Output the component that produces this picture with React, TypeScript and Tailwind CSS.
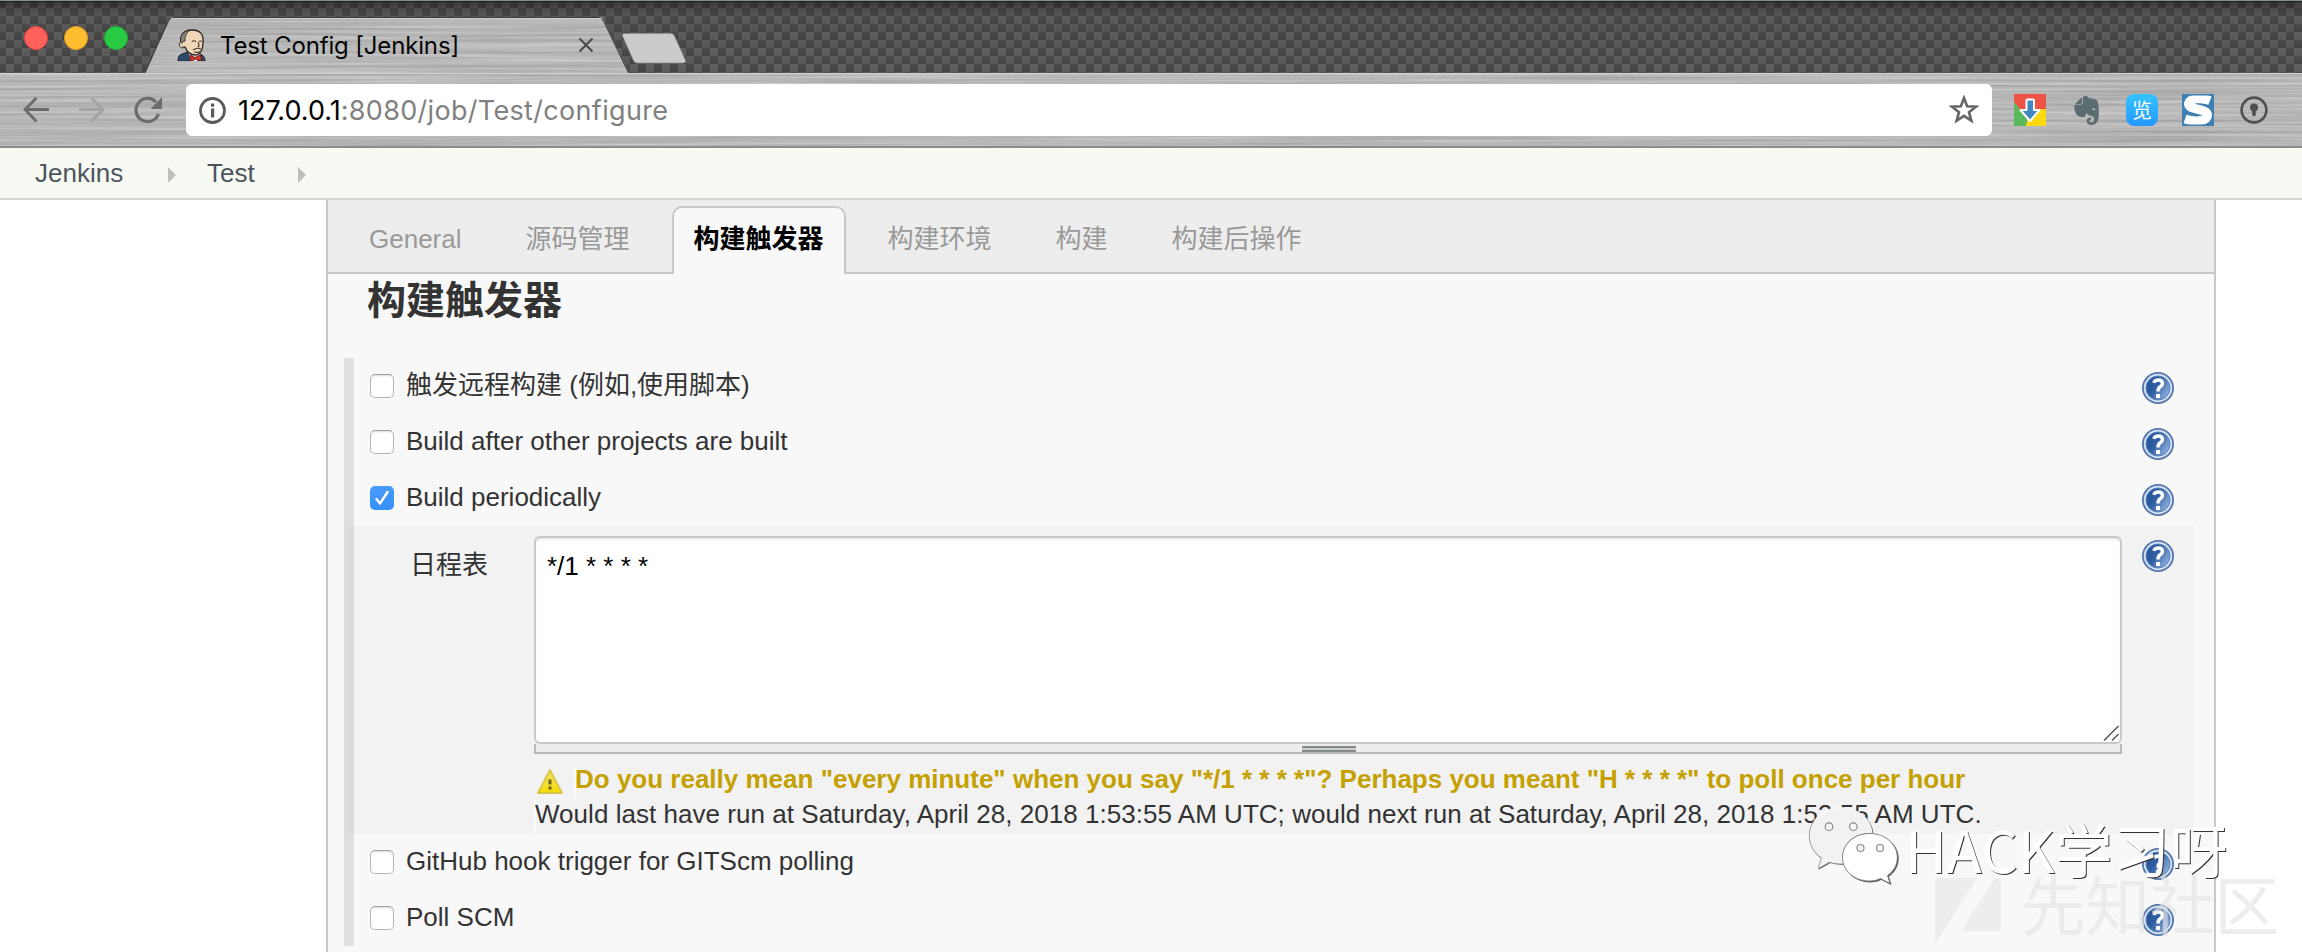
import React from "react";
import { SiEvernote } from "react-icons/si";

const LATIN = "font-['Liberation_Sans','Noto_Sans_CJK_SC',sans-serif]";

function Brushed({ id, seed }: { id: string; seed: number }) {
  return (
    <svg className="pointer-events-none absolute inset-0 h-full w-full" aria-hidden="true">
      <filter id={id} x="0" y="0" width="100%" height="100%" colorInterpolationFilters="sRGB">
        <feTurbulence type="fractalNoise" baseFrequency="0.004 0.35" numOctaves={3} seed={seed} />
        <feColorMatrix values="0.22 0 0 0 0.61  0.22 0 0 0 0.61  0.22 0 0 0 0.61  0 0 0 0 1" />
      </filter>
      <rect width="100%" height="100%" filter={`url(#${id})`} />
    </svg>
  );
}

function CarbonFibre() {
  return (
    <svg className="pointer-events-none absolute inset-0 h-full w-full" aria-hidden="true">
      <defs>
        <linearGradient id="cell" x1="0" y1="0" x2="0" y2="1">
          <stop offset="0" stopColor="#4e4e4e" />
          <stop offset="1" stopColor="#434343" />
        </linearGradient>
        <linearGradient id="lite" x1="0" y1="0" x2="0" y2="1">
          <stop offset="0" stopColor="#606060" />
          <stop offset="1" stopColor="#585858" />
        </linearGradient>
        <pattern id="weave" x="-2" y="0" width="16" height="16" patternUnits="userSpaceOnUse">
          <rect width="16" height="16" fill="url(#lite)" />
          <rect x="0" y="0" width="8" height="8" fill="url(#cell)" />
          <rect x="8" y="8" width="8" height="8" fill="url(#cell)" />
        </pattern>
        <linearGradient id="topshade" x1="0" y1="0" x2="0" y2="1">
          <stop offset="0" stopColor="#000" stopOpacity="0.4" />
          <stop offset="0.2" stopColor="#000" stopOpacity="0.05" />
          <stop offset="1" stopColor="#000" stopOpacity="0" />
        </linearGradient>
      </defs>
      <rect width="100%" height="100%" fill="url(#weave)" />
      <rect width="100%" height="100%" fill="url(#topshade)" />
      <rect width="100%" height="1" fill="#8a8f8b" />
      <rect y="1" width="100%" height="1" fill="#202420" />
    </svg>
  );
}

function Butler() {
  return (
    <svg width="32" height="32" viewBox="0 0 32 32" aria-hidden="true">
      <path d="M2 32c0-4 1-6 4-7l6-2 12 2c3 1 5 3 5 7z" fill="#2d4a68" stroke="#1d2429" strokeWidth="1" />
      <path d="M12 22l3 10h6l3-7z" fill="#f5f1ec" />
      <path d="M5 15C3 6 8 1 16 1c8 0 12 4 11 13 0 7-3 12-8 12-5 0-8-3-10-8-2 1-4-1-4-3z" fill="#efd6b9" stroke="#2a2523" strokeWidth="1.3" />
      <path d="M5 16C3 7 7 2 14 1.200c-4 3-5 6-5 11l-2 0z" fill="#8b8480" stroke="#2a2523" strokeWidth="0.8" />
      <path d="M5 13c-3 1-2 6 2 6" fill="#efd6b9" stroke="#2a2523" strokeWidth="1" />
      <path d="M16 12.500q2-1.500 4 0M23 12.500q1.500-1 3 0M22 13c1 3 2 4 0 5M17 21c3-2 6-2 8-1M18 23q3 1 6-.5" fill="none" stroke="#4a3a30" strokeWidth="1.200" />
      <path d="M14 26l5 2.500 6-3v7l-5-2.500-6 2.500z" fill="#d9332c" stroke="#5c1512" strokeWidth="0.8" />
    </svg>
  );
}

function TabStrip() {
  return (
    <div className="relative flex h-[73px] items-start">
      <CarbonFibre />
      <div className="relative flex gap-4 pl-6 pt-[26px]">
        <span className="h-6 w-6 rounded-full border border-[#e2463f] bg-[#ff6059]" />
        <span className="h-6 w-6 rounded-full border border-[#e0a023] bg-[#ffbe2f]" />
        <span className="h-6 w-6 rounded-full border border-[#1fae34] bg-[#28cb41]" />
      </div>
      <div className="relative ml-[17px] mt-[17px] h-14 w-[484px]">
        <div className="absolute inset-0 [clip-path:polygon(26px_0,457px_0,100%_100%,0_100%)]">
          <Brushed id="brushTab" seed={4} />
        </div>
        <svg className="absolute inset-0" width="484" height="56" aria-hidden="true">
          <path d="M0 56L23 4Q25 .5 28 .5H454Q457 .5 458.500 4L483.500 56" fill="none" stroke="#3c3c3c" />
          <path d="M27 1.500H456" stroke="#cfcfcf" />
        </svg>
        <div className="relative flex h-full items-center pl-[31px] pr-[35px]">
          <Butler />
          <span className="ml-[12px] flex-1 whitespace-nowrap pt-[2px] font-[Inter,sans-serif] text-[24px] leading-8 tracking-[-0.16px] text-[#050505]">
            Test Config [Jenkins]
          </span>
          <svg width="16" height="16" viewBox="0 0 16 16" aria-hidden="true">
            <path d="M1.500 1.500l13 13M14.500 1.500l-13 13" stroke="#4c4c4c" strokeWidth="2.200" />
          </svg>
        </div>
      </div>
      <svg className="relative -ml-[8px] mt-[33px]" width="66" height="31" viewBox="0 0 66 31" aria-hidden="true">
        <path d="M3 .5H50q2.500 0 3.500 2.500L64.500 27.500q.5 2.500-2 2.500H16q-2.500 0-3.500-2.500L1.500 3Q1 .5 3 .5z" fill="#cbcbcb" stroke="#8d8d8d" strokeWidth="0.8" />
      </svg>
    </div>
  );
}

function ChromeDownload() {
  return (
    <svg width="32" height="32" viewBox="0 0 32 32" aria-hidden="true">
      <path d="M0 0h32v15H16L6 16 0 8z" fill="#ef5347" />
      <path d="M0 8l8 10 8 0-4 14H0z" fill="#5bb85b" />
      <path d="M16 15h16v17H12z" fill="#ffd90f" />
      <path d="M12.500 6.500q0-1 1-1h5.500q1 0 1 1V16h5.500L16 27 6.500 16h6z" fill="#3f87bd" stroke="#fff" strokeWidth="2" strokeLinejoin="round" />
    </svg>
  );
}

function Toolbar() {
  return (
    <div className="relative flex h-[75px] items-center border-b-2 border-[#8c8c8c] border-t border-t-[#d2d2d2] pl-[23px]">
      <Brushed id="brushBar" seed={11} />
      <svg className="relative" width="27" height="26" viewBox="0 0 27 26" fill="none" stroke="#6c6c6c" strokeWidth="3" aria-hidden="true">
        <path d="M26 12.500H2.500M13.500 1L2 12.500 13.500 24.500" />
      </svg>
      <svg className="relative ml-[29px]" width="27" height="26" viewBox="0 0 27 26" fill="none" stroke="#a3a3a3" strokeWidth="3" aria-hidden="true">
        <path d="M0 12.500h23.500M12.500 1L24 12.500 12.500 24.500" />
      </svg>
      <svg className="relative ml-[28px]" width="30" height="28" viewBox="0 0 30 28" aria-hidden="true">
        <path d="M24.500 18A11.600 11.600 0 1 1 22 6" fill="none" stroke="#6c6c6c" strokeWidth="3.200" />
        <path d="M28 1v12H16.500z" fill="#6c6c6c" />
      </svg>
      <div className="relative ml-[22px] flex h-[52px] w-[1806px] items-center rounded-md bg-white pl-[13px] pr-[13px]">
        <svg width="27" height="27" viewBox="0 0 27 27" aria-hidden="true">
          <circle cx="13.500" cy="13.500" r="12" fill="none" stroke="#5b5b5b" strokeWidth="2.800" />
          <rect x="12" y="11.500" width="3.200" height="9" fill="#5b5b5b" />
          <rect x="12" y="6.500" width="3.200" height="3.200" fill="#5b5b5b" />
        </svg>
        <span className="ml-3 flex-1 whitespace-nowrap pt-[2px] font-[Inter,sans-serif] text-[27px] leading-9 tracking-[0.32px] text-[#808080]">
          <span className="tracking-normal text-black">127.0.0.1</span>:8080/job/Test/configure
        </span>
        <svg width="30" height="30" viewBox="0 0 30 30" aria-hidden="true">
          <path d="M15 3l3.100 8.300 8.900.4-7 5.500 2.400 8.600L15 20.900l-7.400 4.900L10 17.200 3 11.700l8.900-.4z" fill="none" stroke="#666" strokeWidth="2.600" />
        </svg>
      </div>
      <div className="relative ml-[22px] flex items-center">
        <ChromeDownload />
        <SiEvernote className="ml-[26px] text-[#5b6b70]" size={29} />
        <span className="ml-[25px] flex h-8 w-8 items-center justify-center rounded-lg bg-linear-to-b from-[#35c4ff] to-[#2697ff] font-['Noto_Sans_CJK_SC',sans-serif] text-[20px] leading-none text-white">
          览
        </span>
        <svg className="ml-6" width="32" height="32" viewBox="0 0 32 32" aria-hidden="true">
          <rect width="32" height="32" fill="#3e80b4" />
          <path d="M28 6.500C20 3.500 8 4 6.500 9.500C6 17 26 13.500 25.500 21.500C25 28 12 28 3 25" fill="none" stroke="#fff" strokeWidth="9" />
          <rect x=".75" y=".75" width="30.500" height="30.500" fill="none" stroke="#3e80b4" strokeWidth="1.500" />
        </svg>
        <svg className="ml-[26px]" width="28" height="28" viewBox="0 0 28 28" aria-hidden="true">
          <circle cx="14" cy="14" r="12.400" fill="none" stroke="#505050" strokeWidth="2.600" />
          <circle cx="14" cy="11.500" r="4" fill="#505050" />
          <rect x="12.200" y="13" width="3.600" height="7" rx="1.500" fill="#505050" />
        </svg>
      </div>
    </div>
  );
}

function Crumb() {
  return (
    <svg width="8" height="16" viewBox="0 0 8 16" aria-hidden="true">
      <path d="M0 0l8 8-8 8z" fill="#bcbfba" />
    </svg>
  );
}

function Breadcrumbs() {
  return (
    <div className="flex h-[52px] items-center border-b-2 border-[#d3d7cf] bg-[#f6faf2] pl-[35px] text-[26px] leading-[30px] text-[#4d545d]">
      <span className="w-[133px]">Jenkins</span>
      <span className="pt-1"><Crumb /></span>
      <span className="ml-[31px] w-[91px]">Test</span>
      <span className="pt-1"><Crumb /></span>
    </div>
  );
}

const TABS = ["General", "源码管理", "构建触发器", "构建环境", "构建", "构建后操作"];

function ConfigTabs() {
  return (
    <div className="flex h-[74px] items-end gap-5 border-b-2 border-[#c8c8c8] bg-[#ededed] pl-[19px] text-[26px] leading-[30px]">
      {TABS.map((t, i) =>
        i === 2 ? (
          <div key={t} className="-mb-[2px] h-[68px] rounded-t-[10px] border-2 border-b-0 border-[#c8c8c8] bg-[#f8f8f8] px-5 pt-4 font-bold text-black">
            {t}
          </div>
        ) : (
          <div key={t} className="h-[66px] border-2 border-transparent px-5 pt-4 text-[#999]">
            {t}
          </div>
        )
      )}
    </div>
  );
}

function HelpIcon() {
  return (
    <svg className="shrink-0" width="32" height="32" viewBox="0 0 32 32" aria-hidden="true">
      <defs>
        <linearGradient id="ball" x1="0" y1="0" x2="1" y2="0.6">
          <stop offset="0" stopColor="#234f95" />
          <stop offset="0.5" stopColor="#2f5fa3" />
          <stop offset="1" stopColor="#8aabdb" />
        </linearGradient>
      </defs>
      <circle cx="16" cy="16" r="15.100" fill="#d3e2f3" stroke="#5576ab" strokeWidth="1.800" />
      <circle cx="16" cy="16" r="12" fill="url(#ball)" stroke="#5c80b8" strokeWidth="1" />
      <path d="M11.800 10.800Q12.600 8 16.400 8 20.400 8 20.400 11.300 20.400 13.500 18 15 16 16.200 16 19.600" fill="none" stroke="#fff" strokeWidth="3.400" />
      <rect x="14" y="22" width="4" height="4" fill="#fff" />
    </svg>
  );
}

function Checkbox({ on }: { on?: boolean }) {
  return on ? (
    <span className="flex h-6 w-6 items-center justify-center rounded-[5px] bg-linear-to-b from-[#4a9cf7] to-[#3390fb]">
      <svg width="16" height="18" viewBox="0 0 16 18" aria-hidden="true">
        <path d="M2.500 10l3.500 4.500L13.500 3" fill="none" stroke="#fff" strokeWidth="2.400" strokeLinecap="round" strokeLinejoin="round" />
      </svg>
    </span>
  ) : (
    <span className="h-6 w-6 rounded-[5px] border border-[#b5b5b5] border-t-[#a0a0a0] bg-white shadow-[inset_0_2px_2px_-1px_#ddd]" />
  );
}

function OptionRow({ label, on }: { label: string; on?: boolean }) {
  return (
    <div className="flex h-14 items-center pl-4 pr-10">
      <Checkbox on={on} />
      <span className="-mt-[3px] ml-3 flex-1 leading-[30px]">{label}</span>
      <span className="pt-[3px]"><HelpIcon /></span>
    </div>
  );
}

function Schedule() {
  return (
    <div className="-ml-[6px] mr-[20px] flex h-[308px] bg-black/[0.025] pl-[62px] pr-5">
      <div className="w-[124px] pt-[24px] leading-[30px]">日程表</div>
      <div className="w-[1588px] pt-[10px]">
        <div className="relative h-[208px] rounded-md border-2 border-[#c8c8c8] bg-white px-[11px] pt-[13px] leading-[30px] text-black shadow-[inset_0_2px_3px_-1px_#ddd]">
          */1 * * * *
          <svg className="absolute bottom-[1px] right-[1px]" width="16" height="16" viewBox="0 0 16 16" aria-hidden="true">
            <path d="M1 15.500L15.500 1M9 15.500L15.500 9" stroke="#555" strokeWidth="1.500" />
          </svg>
        </div>
        <div className="flex h-[10px] items-start justify-center border-2 border-t-0 border-[#b8b8b8] bg-[#ededed] pt-[2px]">
          <span className="ml-[2px] h-[6px] w-[54px] border-y-2 border-[#868a86] bg-[#cdd1cc]" />
        </div>
        <div className="flex h-[44px] items-end">
          <svg className="mb-[2px] ml-[2px]" width="28" height="28" viewBox="0 0 28 28" aria-hidden="true">
            <defs>
              <linearGradient id="warn" x1="0" y1="0" x2="0" y2="1">
                <stop offset="0" stopColor="#f1e36a" />
                <stop offset="1" stopColor="#f5dc05" />
              </linearGradient>
            </defs>
            <path d="M14 2L26 25H2z" fill="url(#warn)" stroke="#d9c643" strokeWidth="1.800" strokeLinejoin="round" />
            <path d="M14 11.500v5M14 18.500v3" stroke="#6b6222" strokeWidth="3" />
          </svg>
          <span className="ml-[10px] h-8 whitespace-nowrap border-l-2 border-[#fafafa] font-bold leading-[26px] text-[#c4a000]">
            <span className="-ml-[1px]">Do you really mean "every minute" when you say "*/1 * * * *"? Perhaps you meant "H * * * *" to poll once per hour</span>
          </span>
        </div>
        <div className="mt-[2px] h-[34px] whitespace-nowrap border-l-2 border-[#fafafa] leading-[28px] tracking-[0.035px]">
          <span className="-ml-[1px]">Would last have run at Saturday, April 28, 2018 1:53:55 AM UTC; would next run at Saturday, April 28, 2018 1:53:55 AM UTC.</span>
        </div>
      </div>
      <div className="ml-5 pt-[14px]"><HelpIcon /></div>
    </div>
  );
}

function Watermarks() {
  return (
    <div className="pointer-events-none absolute inset-0">
      <svg className="absolute left-[1935px] top-[877px]" width="68" height="68" viewBox="0 0 68 68" aria-hidden="true">
        <path d="M0 1H42L0 67zM66 1V54H26L60 1z" fill="#e9e9e9" fillOpacity="0.75" />
      </svg>
      <span className="absolute left-[2021px] top-[862px] whitespace-nowrap font-['Noto_Sans_CJK_SC',sans-serif] text-[64.5px] leading-[80px] text-[#e4e4e4]/65">
        先知社区
      </span>
      <svg className="absolute left-[1800px] top-[794px] drop-shadow-[1px_1px_0.5px_#555]" width="110" height="100" viewBox="0 0 110 100" aria-hidden="true">
        <path d="M40.700 13C58 13 72 25 72.500 39C54 38 42 50 42.500 64Q43 67 44 69.500Q36 70.500 29.500 68L18 74.500 21.500 64C14 59 9.300 51 9.300 42 9.300 26 23 13 40.700 13z" fill="#fff" fillOpacity="0.92" />
        <path d="M69.800 39.500C85 39.500 97.300 50 97.300 63.500 97.300 71 93.500 77.500 87.500 81.500L90 89.500 80.500 84.500Q75.500 87 69.800 87C54 87 42.500 76.500 42.500 63.500 42.500 50 54 39.500 69.800 39.500z" fill="#fff" stroke="#777" strokeWidth="0.8" />
        <path d="M18 74.500L21.500 64C14 59 9.300 51 9.300 42 9.300 36 11 31 14 27" fill="none" stroke="#888" strokeWidth="0.8" />
        <g fill="#f5f5f5" stroke="#8b8b8b" strokeWidth="1.200">
          <circle cx="29" cy="32.700" r="3.800" />
          <circle cx="53.300" cy="32.700" r="3.800" />
          <circle cx="60.500" cy="54" r="3.500" />
          <circle cx="80" cy="54" r="3.500" />
        </g>
      </svg>
      <span className="absolute left-[1905px] top-[808px] whitespace-nowrap font-['Noto_Sans_CJK_SC',sans-serif] text-[57.5px] leading-[80px] text-white [text-shadow:1px_1px_0_#333]">
        HACK学习呀
      </span>
    </div>
  );
}

export default function App() {
  return (
    <div className={`relative h-[952px] w-[2302px] overflow-hidden bg-white ${LATIN}`}>
      <TabStrip />
      <Toolbar />
      <Breadcrumbs />
      <main className="ml-[326px] h-[752px] w-[1890px] border-x-2 border-[#c8c8c8] bg-[#f8f8f8] text-[26px] text-[#333]">
        <ConfigTabs />
        <h1 className="h-[84px] pl-[39px] pt-[3px] text-[39px] font-bold leading-[48px]">构建触发器</h1>
        <div className="ml-4 border-l-[10px] border-[#dfdfdf]">
          <OptionRow label="触发远程构建 (例如,使用脚本)" />
          <OptionRow label="Build after other projects are built" />
          <OptionRow label="Build periodically" on />
          <Schedule />
          <OptionRow label="GitHub hook trigger for GITScm polling" />
          <OptionRow label="Poll SCM" />
        </div>
      </main>
      <Watermarks />
    </div>
  );
}
